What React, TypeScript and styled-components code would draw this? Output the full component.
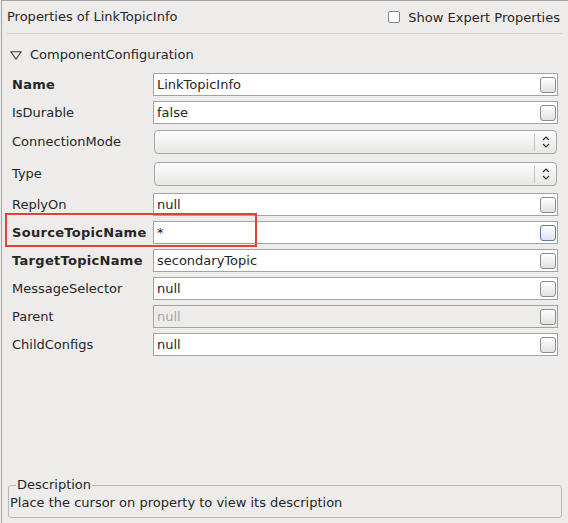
import React from 'react';
import styled, { createGlobalStyle } from 'styled-components';

const GlobalStyle = createGlobalStyle`
  html, body {
    margin: 0;
    padding: 0;
    background: #edeceb;
  }
  body {
    font-family: "DejaVu Sans", "Liberation Sans", sans-serif;
    font-size: 13px;
    color: #262626;
  }
`;

type PropRow = {
  name: string;
  kind: 'text' | 'combo';
  value?: string;
  bold?: boolean;
  disabled?: boolean;
  focused?: boolean;
  highlighted?: boolean;
};

const rows: PropRow[] = [
  { name: 'Name', kind: 'text', value: 'LinkTopicInfo', bold: true },
  { name: 'IsDurable', kind: 'text', value: 'false' },
  { name: 'ConnectionMode', kind: 'combo' },
  { name: 'Type', kind: 'combo' },
  { name: 'ReplyOn', kind: 'text', value: 'null' },
  { name: 'SourceTopicName', kind: 'text', value: '*', bold: true, focused: true, highlighted: true },
  { name: 'TargetTopicName', kind: 'text', value: 'secondaryTopic', bold: true },
  { name: 'MessageSelector', kind: 'text', value: 'null' },
  { name: 'Parent', kind: 'text', value: 'null', disabled: true },
  { name: 'ChildConfigs', kind: 'text', value: 'null' },
];

const Panel = styled.div`
  box-sizing: border-box;
  width: 567px;
  height: 523px;
  margin-left: 1px;
  border-left: 1px solid #a3a3a3;
  border-top: 1px solid #a3a3a3;
  display: flex;
  flex-direction: column;
`;

const Header = styled.div`
  height: 32px;
  display: flex;
  align-items: center;
  justify-content: space-between;
  padding: 0 8px 0 5px;
`;

const Title = styled.span`
  line-height: 16px;
`;

const ExpertToggle = styled.label`
  display: flex;
  align-items: center;
  gap: 8px;
`;

const CheckBox = styled.span`
  box-sizing: border-box;
  width: 12px;
  height: 12px;
  border: 1px solid #858585;
  border-radius: 2px;
  background: #fff;
`;

const Separator = styled.div`
  height: 1px;
  background: #d2d1d0;
  margin: 0 6px 0 5px;
`;

const SectionHeader = styled.div`
  display: flex;
  align-items: center;
  gap: 8px;
  padding: 13px 0 0 8px;
  line-height: 16px;
`;

const Rows = styled.div`
  display: flex;
  flex-direction: column;
  gap: 5px;
  margin-top: 10px;
  padding: 0 10px;
`;

const Row = styled.div<{ $combo?: boolean }>`
  position: relative;
  display: grid;
  grid-template-columns: 141px 1fr;
  align-items: center;
  padding: ${p => (p.$combo ? '1px 0 2px' : '0')};
`;

const Label = styled.span<{ $bold?: boolean }>`
  font-weight: ${p => (p.$bold ? 'bold' : 'normal')};
  letter-spacing: ${p => (p.$bold ? '0.3px' : '0')};
  white-space: nowrap;
  line-height: 16px;
`;

const Field = styled.div<{ $disabled?: boolean }>`
  box-sizing: border-box;
  height: 23px;
  display: flex;
  align-items: center;
  justify-content: space-between;
  border: 1px solid #a2a2a2;
  background: ${p => (p.$disabled ? '#edeceb' : '#ffffff')};
  color: ${p => (p.$disabled ? '#a7a7a7' : '#262626')};
  padding: 0 1px 0 3px;
`;

const FieldButton = styled.span<{ $focused?: boolean }>`
  box-sizing: border-box;
  width: 16px;
  height: 16px;
  border-radius: 3px;
  border: 1px solid ${p => (p.$focused ? '#5a7da6' : '#8c8c8c')};
  background: linear-gradient(#ffffff, ${p => (p.$focused ? '#dde3ec' : '#e2e1e0')});
`;

const Combo = styled.div`
  box-sizing: border-box;
  height: 24px;
  margin: 0 1px;
  display: flex;
  justify-content: flex-end;
  align-items: center;
  border: 1px solid #a6a6a6;
  border-radius: 4px;
  background: linear-gradient(#fefefe, #e7e6e5);
`;

const ComboArrow = styled.span`
  width: 21px;
  height: 17px;
  display: flex;
  align-items: center;
  justify-content: center;
  border-left: 1px solid #c6c5c4;
`;

const Highlight = styled.div`
  position: absolute;
  left: -7px;
  top: -8px;
  width: 252px;
  height: 34px;
  box-sizing: border-box;
  border: 2px solid #e2403b;
  pointer-events: none;
`;

const Spacer = styled.div`
  flex: 1;
`;

const DescriptionBox = styled.fieldset`
  margin: 0 6px 5px 6px;
  padding: 3px 1px 6px 1px;
  border: 1px solid #b9b8b7;
  border-radius: 3px;
`;

const DescriptionLegend = styled.legend`
  margin-left: 6px;
  padding: 0 1px;
  line-height: 14px;
`;

const DescriptionText = styled.div`
  line-height: 16px;
`;

const Triangle = () => (
  <svg width="12" height="9" viewBox="0 0 12 9">
    <path d="M0.8 0.8 H11.2 L6 8.2 Z" fill="none" stroke="#3a3a3a" strokeWidth="1.1" strokeLinejoin="round" />
  </svg>
);

const UpDown = () => (
  <svg width="8" height="14" viewBox="0 0 8 14">
    <path d="M1 5 L4 2 L7 5 M1 9 L4 12 L7 9" fill="none" stroke="#2e2e2e" strokeWidth="1.2" />
  </svg>
);

export default function App() {
  return (
    <>
      <GlobalStyle />
      <Panel>
        <Header>
          <Title>Properties of LinkTopicInfo</Title>
          <ExpertToggle>
            <CheckBox />
            <span>Show Expert Properties</span>
          </ExpertToggle>
        </Header>
        <Separator />
        <SectionHeader>
          <Triangle />
          <span>ComponentConfiguration</span>
        </SectionHeader>
        <Rows>
          {rows.map(r => (
            <Row key={r.name} $combo={r.kind === 'combo'}>
              <Label $bold={r.bold}>{r.name}</Label>
              {r.kind === 'combo' ? (
                <Combo>
                  <ComboArrow>
                    <UpDown />
                  </ComboArrow>
                </Combo>
              ) : (
                <Field $disabled={r.disabled}>
                  <span>{r.value}</span>
                  <FieldButton $focused={r.focused} />
                </Field>
              )}
              {r.highlighted && <Highlight />}
            </Row>
          ))}
        </Rows>
        <Spacer />
        <DescriptionBox>
          <DescriptionLegend>Description</DescriptionLegend>
          <DescriptionText>Place the cursor on property to view its description</DescriptionText>
        </DescriptionBox>
      </Panel>
    </>
  );
}
